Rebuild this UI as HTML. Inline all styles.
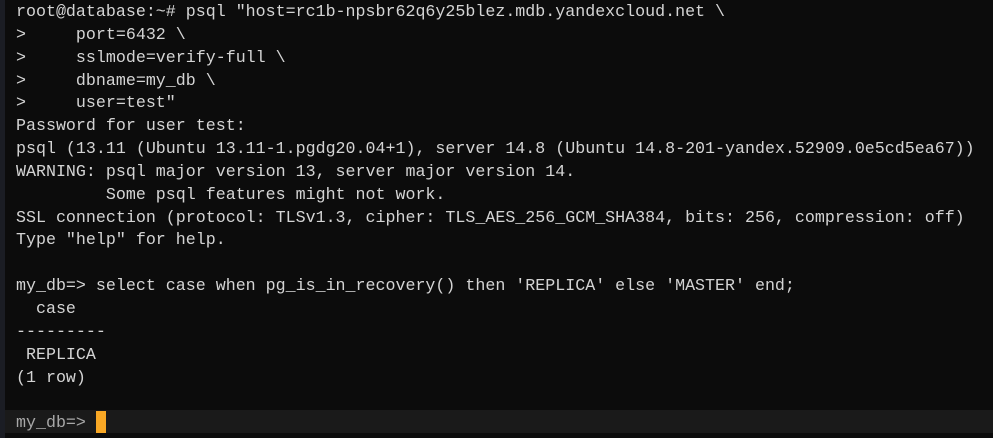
<!DOCTYPE html>
<html><head><style>
html,body{margin:0;padding:0;}
body{width:993px;height:438px;background:#0c0c0c;overflow:hidden;position:relative;}
.l{position:absolute;left:0;top:0;width:5px;height:438px;background:#1b1d24;}
pre{position:absolute;left:16px;top:1px;margin:0;font-family:"Liberation Mono",monospace;font-size:16.65px;line-height:22.85px;color:#d4d4d4;white-space:pre;}
.bar{position:absolute;left:5px;top:410px;width:988px;height:23px;background:#1a1a1a;}
.cur{position:absolute;left:96px;top:411px;width:10px;height:22px;background:#f9a825;}
.g{color:#a8a8a8;}
</style></head><body>
<div class="l"></div>
<div class="bar"></div>
<pre>root@database:~# psql "host=rc1b-npsbr62q6y25blez.mdb.yandexcloud.net \
>     port=6432 \
>     sslmode=verify-full \
>     dbname=my_db \
>     user=test"
Password for user test:
psql (13.11 (Ubuntu 13.11-1.pgdg20.04+1), server 14.8 (Ubuntu 14.8-201-yandex.52909.0e5cd5ea67))
WARNING: psql major version 13, server major version 14.
         Some psql features might not work.
SSL connection (protocol: TLSv1.3, cipher: TLS_AES_256_GCM_SHA384, bits: 256, compression: off)
Type "help" for help.

my_db=> select case when pg_is_in_recovery() then 'REPLICA' else 'MASTER' end;
  case
---------
 REPLICA
(1 row)

<span class="g">my_db=></span></pre>
<div class="cur"></div>
</body></html>
